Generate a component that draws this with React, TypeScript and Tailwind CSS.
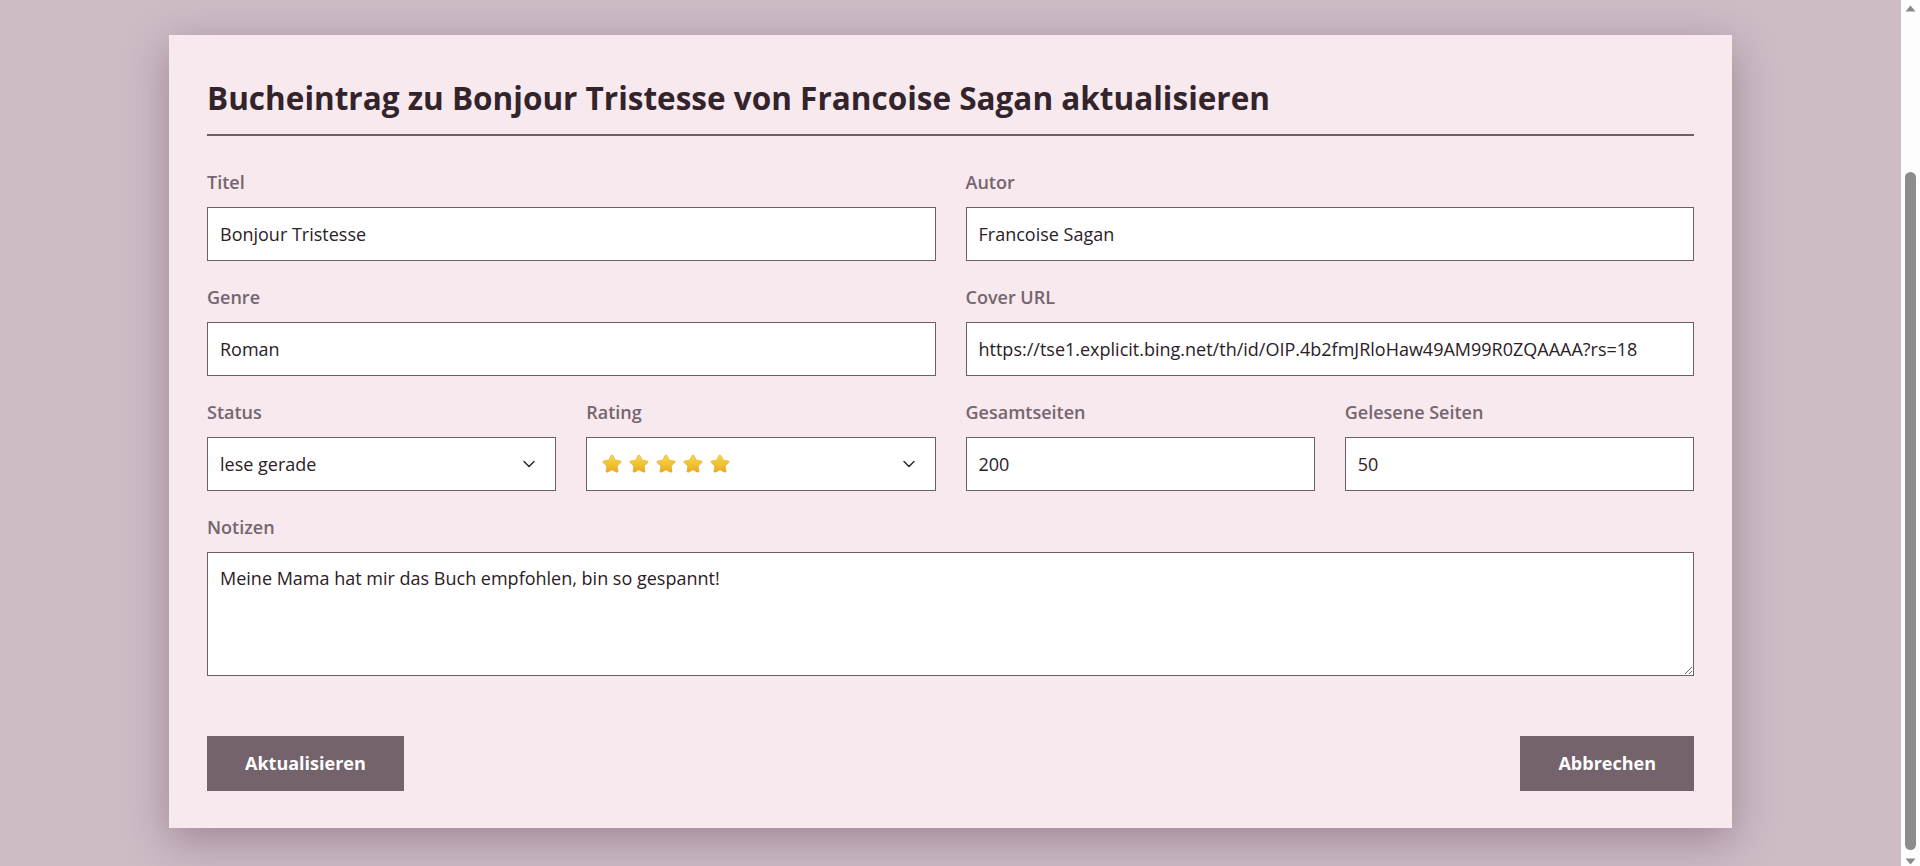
const fontCls = "font-['Open_Sans','Noto_Sans',sans-serif]";
const labelCls =
  "block text-[18px] leading-[27px] font-semibold text-[#75656e] mb-[11px]";
const inputCls =
  "block w-full h-[54px] border border-[#6d5f67] bg-white px-[12px] text-[18px] text-[#2b2027] outline-none font-['Open_Sans','Noto_Sans',sans-serif]";

function Chevron() {
  return (
    <svg width="12" height="8" viewBox="0 0 12 8" fill="none" className="shrink-0">
      <path d="M1 1.5l5 5 5-5" stroke="#2b2027" strokeWidth="1.4" strokeLinecap="round" strokeLinejoin="round" />
    </svg>
  );
}

function Star({ id }: { id: number }) {
  return (
    <svg width="22" height="22" viewBox="0 0 24 24" className="shrink-0">
      <defs>
        <linearGradient id={`sg${id}`} x1="0" y1="0" x2="0" y2="1">
          <stop offset="0" stopColor="#fbd94a" />
          <stop offset="1" stopColor="#e9ac1c" />
        </linearGradient>
      </defs>
      <path
        d="M12 2.2c.5 0 .9.3 1.1.7l2.4 4.9 5.4.8c.9.1 1.3 1.2.6 1.9l-3.9 3.8.9 5.4c.2.9-.8 1.6-1.6 1.2L12 18.3l-4.9 2.6c-.8.4-1.8-.3-1.6-1.2l.9-5.4-3.9-3.8c-.7-.7-.3-1.8.6-1.9l5.4-.8 2.4-4.9c.2-.4.6-.7 1.1-.7z"
        fill={`url(#sg${id})`}
        stroke="#d99a12"
        strokeWidth="0.6"
      />
    </svg>
  );
}

function Field({ label, value }: { label: string; value: string }) {
  return (
    <div>
      <label className={labelCls}>{label}</label>
      <input className={inputCls} defaultValue={value} readOnly />
    </div>
  );
}

function ScrollBar() {
  return (
    <div className="w-[19px] h-[866px] shrink-0 bg-[#fdfdfd] flex flex-col items-center">
      <svg width="11" height="7" viewBox="0 0 11 7" className="mt-[5px]">
        <path d="M5.5 0.5L10.5 6.5H0.5z" fill="#8a8a8a" />
      </svg>
      <div className="mt-[160px] w-[11px] h-[678px] rounded-full bg-[#8c8c8c]" />
      <svg width="11" height="7" viewBox="0 0 11 7" className="mt-[8px]">
        <path d="M0.5 0.5H10.5L5.5 6.5z" fill="#8a8a8a" />
      </svg>
    </div>
  );
}

export default function App() {
  return (
    <div className={`flex h-[866px] overflow-hidden bg-[#cdbbc6] ${fontCls}`}>
      <div className="flex-1 pt-[35px]">
        <div className="mx-auto w-[1563px] bg-[#f7e9ee] px-[38px] pt-[39px] pb-[37px] shadow-[0_12px_40px_rgba(70,40,55,0.35)]">
          <h1 className="text-[31.5px] leading-[48px] font-bold text-[#33242b] pb-[12px] border-b-2 border-[#6d5f67]">
            Bucheintrag zu Bonjour Tristesse von Francoise Sagan aktualisieren
          </h1>

          <form className="mt-[33px]" onSubmit={(e) => e.preventDefault()}>
            <div className="grid grid-cols-2 gap-x-[30px] gap-y-[23px]">
              <Field label="Titel" value="Bonjour Tristesse" />
              <Field label="Autor" value="Francoise Sagan" />
              <Field label="Genre" value="Roman" />
              <Field
                label="Cover URL"
                value="https://tse1.explicit.bing.net/th/id/OIP.4b2fmJRloHaw49AM99R0ZQAAAA?rs=18"
              />
            </div>

            <div className="grid grid-cols-4 gap-x-[30px] mt-[23px]">
              <div>
                <label className={labelCls}>Status</label>
                <div className="flex items-center justify-between h-[54px] border border-[#6d5f67] bg-white pl-[12px] pr-[20px] text-[18px] text-[#2b2027]">
                  <span>lese gerade</span>
                  <Chevron />
                </div>
              </div>
              <div>
                <label className={labelCls}>Rating</label>
                <div className="flex items-center justify-between h-[54px] border border-[#6d5f67] bg-white pl-[14px] pr-[20px]">
                  <div className="flex items-center gap-[5px]">
                    {[0, 1, 2, 3, 4].map((i) => (
                      <Star key={i} id={i} />
                    ))}
                  </div>
                  <Chevron />
                </div>
              </div>
              <Field label="Gesamtseiten" value="200" />
              <Field label="Gelesene Seiten" value="50" />
            </div>

            <div className="mt-[23px]">
              <label className={labelCls}>Notizen</label>
              <textarea
                className="block w-full h-[124px] border border-[#6d5f67] bg-white px-[12px] pt-[12px] text-[18px] leading-[27px] text-[#2b2027] outline-none font-['Open_Sans','Noto_Sans',sans-serif]"
                defaultValue="Meine Mama hat mir das Buch empfohlen, bin so gespannt!"
                readOnly
              />
            </div>

            <div className="flex justify-between mt-[60px]">
              <button
                type="submit"
                className="h-[55px] px-[38px] bg-[#74626c] text-white text-[18px] font-bold"
              >
                Aktualisieren
              </button>
              <button
                type="button"
                className="h-[55px] px-[38px] bg-[#74626c] text-white text-[18px] font-bold"
              >
                Abbrechen
              </button>
            </div>
          </form>
        </div>
      </div>
      <ScrollBar />
    </div>
  );
}
